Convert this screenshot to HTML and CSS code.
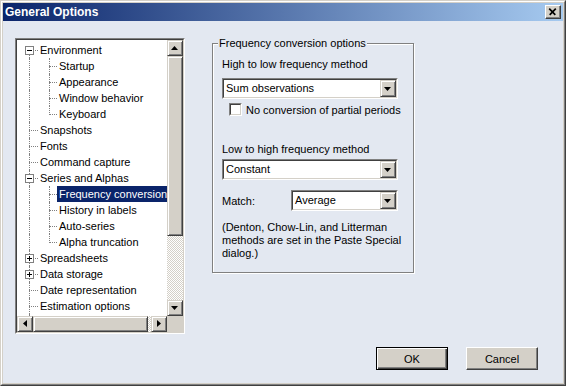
FILE: index.html
```html
<!DOCTYPE html>
<html>

<head>
    <meta charset="UTF-8">
    <title>General Options</title>
    <link rel="stylesheet" href="styles.css">
</head>

<body>

    <!-- =========== Dialog window =========== -->
    <div class="window">
        <div class="frame">

            <div class="titlebar">
                <span class="title">General Options</span>
                <span class="close">
                    <svg width="16" height="14" viewBox="0 0 16 14">
                        <path d="M4.5 3.5 L11 10 M11.5 3.5 L5 10" stroke="#000" stroke-width="1.8" fill="none" />
                    </svg>
                </span>
            </div>

            <div class="client">
                <div class="panes">

                    <!-- =========== Tree =========== -->
                    <div class="tree">
                        <div class="tree-in">
                            <div class="items">
                                <div class="row"><span class="g first"><span class="exp minus"></span></span><span class="txt">Environment</span></div>
                                <div class="row"><span class="g pass"></span><span class="g g1 tee"></span><span class="txt">Startup</span></div>
                                <div class="row"><span class="g pass"></span><span class="g g1 tee"></span><span class="txt">Appearance</span></div>
                                <div class="row"><span class="g pass"></span><span class="g g1 tee"></span><span class="txt">Window behavior</span></div>
                                <div class="row"><span class="g pass"></span><span class="g g1 end"></span><span class="txt">Keyboard</span></div>
                                <div class="row"><span class="g tee"></span><span class="txt">Snapshots</span></div>
                                <div class="row"><span class="g tee"></span><span class="txt">Fonts</span></div>
                                <div class="row"><span class="g tee"></span><span class="txt">Command capture</span></div>
                                <div class="row"><span class="g tee"><span class="exp minus"></span></span><span class="txt">Series and Alphas</span></div>
                                <div class="row"><span class="g pass"></span><span class="g g1 tee"></span><span class="txt sel">Frequency conversion</span></div>
                                <div class="row"><span class="g pass"></span><span class="g g1 tee"></span><span class="txt">History in labels</span></div>
                                <div class="row"><span class="g pass"></span><span class="g g1 tee"></span><span class="txt">Auto-series</span></div>
                                <div class="row"><span class="g pass"></span><span class="g g1 end"></span><span class="txt">Alpha truncation</span></div>
                                <div class="row"><span class="g tee"><span class="exp plus"></span></span><span class="txt">Spreadsheets</span></div>
                                <div class="row"><span class="g tee"><span class="exp plus"></span></span><span class="txt">Data storage</span></div>
                                <div class="row"><span class="g tee"></span><span class="txt">Date representation</span></div>
                                <div class="row"><span class="g tee"></span><span class="txt">Estimation options</span></div>
                                <div class="row"><span class="g pass"></span></div>
                            </div>

                            <div class="vscroll">
                                <span class="sb-btn arrow-up"></span>
                                <span class="sb-thumb vthumb"></span>
                                <span class="sb-track"></span>
                                <span class="sb-btn arrow-down"></span>
                            </div>

                            <div class="hscroll">
                                <span class="sb-btn arrow-left"></span>
                                <span class="sb-thumb hthumb"></span>
                                <span class="sb-track"></span>
                                <span class="sb-btn arrow-right"></span>
                            </div>

                            <div class="corner"></div>
                        </div>
                    </div>

                    <!-- =========== Options group =========== -->
                    <fieldset class="group">
                        <legend>Frequency conversion options</legend>

                        <div class="label">High to low frequency method</div>
                        <div class="combo combo-1">
                            <div class="combo-in">
                                <span class="combo-val">Sum observations</span>
                                <span class="drop"></span>
                            </div>
                        </div>

                        <div class="check-row">
                            <span class="check"><span class="check-in"></span></span>
                            <span>No conversion of partial periods</span>
                        </div>

                        <div class="label label-2">Low to high frequency method</div>
                        <div class="combo combo-2">
                            <div class="combo-in">
                                <span class="combo-val">Constant</span>
                                <span class="drop"></span>
                            </div>
                        </div>

                        <div class="match-row">
                            <span class="match-label">Match:</span>
                            <div class="combo combo-3">
                                <div class="combo-in">
                                    <span class="combo-val">Average</span>
                                    <span class="drop"></span>
                                </div>
                            </div>
                        </div>

                        <p class="note">(Denton, Chow-Lin, and Litterman<br>methods are set in the Paste Special<br>dialog.)</p>
                    </fieldset>

                </div>

                <!-- =========== Buttons =========== -->
                <div class="footer">
                    <button class="btn default">OK</button>
                    <button class="btn">Cancel</button>
                </div>
            </div>

        </div>
    </div>

</body>

</html>
```

FILE: styles.css
```css
* {
    margin: 0;
    padding: 0;
    box-sizing: border-box;
}

:root {
    --face: #d4d0c8;
    --shadow: #808080;
    --dark: #404040;
    --light: #fff;
    --client: #e3e8f1;
    --select: #0a246a;
}

body {
    font-family: "Liberation Sans", Arial, sans-serif;
    font-size: 11px;
    color: #000;
    background: var(--client);
}

.window {
    width: 566px;
    height: 386px;
    border: 1px solid;
    border-color: var(--face) var(--dark) var(--dark) var(--face);
}

.frame {
    height: 100%;
    border: 1px solid;
    border-color: var(--light) var(--shadow) var(--shadow) var(--light);
    padding: 1px;
    background: var(--face);
    display: flex;
    flex-direction: column;
}

/* title bar */
.titlebar {
    height: 18px;
    flex: none;
    display: flex;
    align-items: flex-start;
    justify-content: space-between;
    background: linear-gradient(to right, #0a246a, #a6caf0);
}

.title {
    color: #fff;
    font-weight: bold;
    font-size: 12px;
    line-height: 18px;
    padding-left: 2px;
}

.close {
    width: 16px;
    height: 14px;
    margin: 2px 2px 0 0;
    background: var(--face);
    border: 1px solid;
    border-color: var(--light) var(--dark) var(--dark) var(--light);
    box-shadow: inset -1px -1px var(--shadow);
    display: flex;
    align-items: center;
    justify-content: center;
}

.close svg {
    margin: -1px 0 0 -1px;
}

.client {
    flex: 1;
    background: var(--client);
    padding: 17px 25px 0 12px;
}

.panes {
    display: flex;
    align-items: flex-start;
}

/* tree view */
.tree {
    width: 170px;
    height: 296px;
    flex: none;
    border: 1px solid;
    border-color: var(--shadow) var(--light) var(--light) var(--shadow);
}

.tree-in {
    height: 100%;
    border: 1px solid;
    border-color: var(--dark) var(--face) var(--face) var(--dark);
    background: #fff;
    display: grid;
    grid-template-columns: 150px 16px;
    grid-template-rows: 276px 16px;
}

.items {
    overflow: hidden;
    padding-top: 2px;
}

.row {
    display: flex;
    height: 16px;
    line-height: 16px;
    white-space: nowrap;
}

.g {
    --x: 12px;
    position: relative;
    flex: none;
    width: 21px;
    height: 16px;
}

.g1 {
    --x: 11px;
    width: 19px;
}

.g::before,
.g::after {
    content: '';
    position: absolute;
}

.g::before {
    left: var(--x);
    border-left: 1px dotted var(--shadow);
}

.pass::before,
.tee::before {
    top: 0;
    bottom: 0;
}

.end::before {
    top: 0;
    height: 9px;
}

.first::before {
    top: 8px;
    bottom: 0;
}

.tee::after,
.end::after,
.first::after {
    left: var(--x);
    right: 0;
    top: 8px;
    border-top: 1px dotted var(--shadow);
}

.exp {
    position: absolute;
    left: 8px;
    top: 4px;
    width: 9px;
    height: 9px;
    border: 1px solid var(--shadow);
    background: #fff;
    z-index: 1;
}

.exp::before,
.exp::after {
    content: '';
    position: absolute;
    background: #000;
}

.exp::before {
    left: 1px;
    top: 3px;
    width: 5px;
    height: 1px;
}

.plus::after {
    left: 3px;
    top: 1px;
    width: 1px;
    height: 5px;
}

.txt {
    padding: 0 2px;
}

.txt.sel {
    background: var(--select);
    color: #fff;
}

/* scrollbars */
.vscroll {
    display: flex;
    flex-direction: column;
}

.hscroll {
    display: flex;
}

.sb-btn,
.sb-thumb {
    flex: none;
    position: relative;
    background: var(--face);
    border: 1px solid;
    border-color: var(--face) var(--dark) var(--dark) var(--face);
    box-shadow: inset 1px 1px var(--light), inset -1px -1px var(--shadow);
}

.sb-btn {
    width: 16px;
    height: 16px;
}

.vthumb {
    height: 180px;
}

.hthumb {
    width: 115px;
}

.sb-track {
    flex: 1;
    background-color: #fff;
    background-image: conic-gradient(var(--face) 25%, #fff 0 50%, var(--face) 0 75%, #fff 0);
    background-size: 2px 2px;
}

.sb-btn::after {
    content: '';
    position: absolute;
    background: #000;
}

.arrow-up::after {
    left: 3px;
    top: 5px;
    width: 7px;
    height: 4px;
    clip-path: polygon(50% 0, 100% 100%, 0 100%);
}

.arrow-down::after {
    left: 3px;
    top: 5px;
    width: 7px;
    height: 4px;
    clip-path: polygon(0 0, 100% 0, 50% 100%);
}

.arrow-left::after {
    left: 5px;
    top: 3px;
    width: 4px;
    height: 7px;
    clip-path: polygon(100% 0, 100% 100%, 0 50%);
}

.arrow-right::after {
    left: 5px;
    top: 3px;
    width: 4px;
    height: 7px;
    clip-path: polygon(0 0, 100% 50%, 0 100%);
}

.corner {
    background: var(--face);
}

/* options group */
.group {
    width: 202px;
    margin: -1px 0 0 27px;
    padding: 9px 0 12px 9px;
    border: 1px solid var(--shadow);
    box-shadow: inset 1px 1px var(--light), 1px 1px var(--light);
    min-width: 0;
}

.group legend {
    margin-left: -4px;
    padding: 0 1px;
    line-height: 12px;
    background: var(--client);
}

.label {
    line-height: 13px;
}

.label-2 {
    margin-top: 27px;
}

.combo {
    height: 21px;
    border: 1px solid;
    border-color: var(--shadow) var(--light) var(--light) var(--shadow);
}

.combo-1 {
    width: 176px;
    margin-top: 7px;
}

.combo-2 {
    width: 176px;
    margin-top: 3px;
}

.combo-3 {
    width: 107px;
}

.combo-in {
    height: 100%;
    display: flex;
    border: 1px solid;
    border-color: var(--dark) var(--face) var(--face) var(--dark);
    background: #fff;
}

.combo-val {
    flex: 1;
    padding-left: 2px;
    line-height: 17px;
}

.drop {
    width: 16px;
    position: relative;
    background: var(--face);
    border: 1px solid;
    border-color: var(--face) var(--dark) var(--dark) var(--face);
    box-shadow: inset 1px 1px var(--light), inset -1px -1px var(--shadow);
}

.drop::after {
    content: '';
    position: absolute;
    left: 3px;
    top: 6px;
    width: 7px;
    height: 4px;
    background: #000;
    clip-path: polygon(0 0, 100% 0, 50% 100%);
}

.check-row {
    display: flex;
    align-items: center;
    gap: 4px;
    height: 13px;
    margin: 4px 0 0 7px;
}

.check {
    width: 13px;
    height: 13px;
    border: 1px solid;
    border-color: var(--shadow) var(--light) var(--light) var(--shadow);
}

.check-in {
    display: block;
    height: 100%;
    border: 1px solid;
    border-color: var(--dark) var(--face) var(--face) var(--dark);
    background: #fff;
}

.match-row {
    display: flex;
    align-items: center;
    margin-top: 10px;
}

.match-label {
    width: 69px;
}

.note {
    margin-top: 10px;
    line-height: 13px;
}

/* dialog buttons */
.footer {
    display: flex;
    justify-content: flex-end;
    gap: 18px;
    margin-top: 13px;
}

.btn {
    width: 72px;
    height: 23px;
    font-family: inherit;
    font-size: 11px;
    color: #000;
    background: var(--face);
    border: 1px solid;
    border-color: var(--light) var(--dark) var(--dark) var(--light);
    box-shadow: inset -1px -1px var(--shadow);
}

.btn.default {
    border-color: #000;
    box-shadow: inset 1px 1px var(--light), inset -1px -1px var(--dark), inset -2px -2px var(--shadow);
}
```
